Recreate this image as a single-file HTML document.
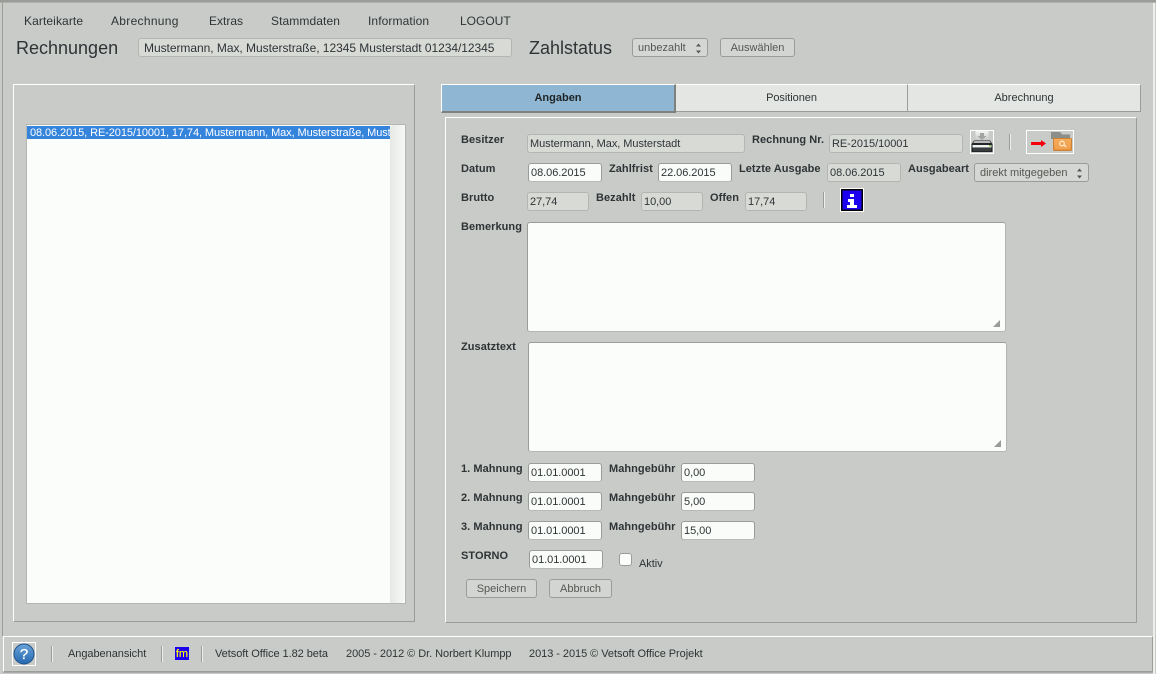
<!DOCTYPE html>
<html><head><meta charset="utf-8">
<style>
html,body{margin:0;padding:0;width:1156px;height:674px;overflow:hidden;background:#c9cbc8;}
body{position:relative;font-family:"Liberation Sans",sans-serif;font-size:11px;color:#2e3436;}
div,span{position:absolute;box-sizing:border-box;white-space:nowrap;}
.m{font-size:12px;top:13px;line-height:16px;}
.t{font-size:18px;line-height:22px;top:37px;}
.l{font-weight:bold;font-size:11px;line-height:14px;color:#2e3436;letter-spacing:.05px;}
.ro,.in{height:19px;border-radius:3px;font-size:11px;line-height:18px;padding-left:2px;overflow:hidden;letter-spacing:-.05px;}
.ro{background:#d8dad6;border:1px solid #b4b6b3;color:#2e3436;}
.in{background:#fafcf9;border:1px solid #9a9c99;border-bottom-color:#b8bab7;color:#2e3436;}
.btn{height:19px;border-radius:3px;background:#d3d5d2;border:1px solid #9a9c99;color:#555753;font-size:11px;line-height:18px;text-align:center;}
.ta{background:#fbfdfa;border:1px solid #9a9c99;border-radius:3px;border-bottom-color:#b4b6b3;border-right-color:#b4b6b3;}
.grip{width:0;height:0;border-style:solid;border-width:0 0 7px 7px;border-color:transparent transparent #9a9c99 transparent;}
.sep{width:1px;background:#9a9c99;border-right:1px solid #eef0ed;box-sizing:content-box;}
.s{top:647px;line-height:14px;font-size:11px;color:#2e3436;letter-spacing:-.05px;}
</style></head><body>
<!-- window frame -->
<div style="left:0;top:0;width:1156px;height:3px;background:#9a9c98;border-bottom:1px solid #b0b2af"></div>
<div style="left:2px;top:2px;width:1px;height:634px;background:#9a9c98"></div>
<div style="left:1153px;top:3px;width:2px;height:671px;background:#eef0ed"></div>

<!-- menu -->
<span class="m" style="left:24px;letter-spacing:.1px">Karteikarte</span>
<span class="m" style="left:111px;letter-spacing:.3px">Abrechnung</span>
<span class="m" style="left:209px">Extras</span>
<span class="m" style="left:271px;letter-spacing:.1px">Stammdaten</span>
<span class="m" style="left:368px;letter-spacing:.1px">Information</span>
<span class="m" style="left:460px">LOGOUT</span>

<span class="t" style="left:16px">Rechnungen</span>
<div class="ro" style="left:138px;top:38px;width:374px;padding-left:5px;font-size:12px;letter-spacing:-.04px">Mustermann, Max, Musterstraße, 12345 Musterstadt 01234/12345</div>
<span class="t" style="left:529px">Zahlstatus</span>
<div class="btn" style="left:632px;top:38px;width:76px;text-align:left;padding-left:5px;background:#d5d7d4">unbezahlt
<svg style="position:absolute;left:61px;top:3px" width="9" height="13"><path d="M2 4.500L4.500 1.500L7 4.500ZM2 8.500L4.500 11.500L7 8.500Z" fill="#555753"/></svg></div>
<div class="btn" style="left:720px;top:38px;width:75px">Auswählen</div>

<!-- left panel -->
<div style="left:13px;top:84px;width:402px;height:538px;border:1px solid #9a9c98;border-top-color:#fff;border-left-color:#fff"></div>
<div style="left:26px;top:124px;width:380px;height:480px;background:#fbfdfa;border:1px solid #b4b6b3;overflow:hidden">
 <div style="left:0;top:1px;width:363px;height:13px;background:#3584dc;color:#fff;font-size:11px;line-height:14px;padding-left:3px;overflow:hidden;letter-spacing:-.09px">08.06.2015, RE-2015/10001, 17,74, Mustermann, Max, Musterstraße, Mustermann</div>
 <div style="left:363px;top:0;width:15px;height:478px;background:linear-gradient(90deg,#e6e8e5,#f7f9f6);border-radius:4px 0 6px 0"></div>
</div>

<!-- tabs -->
<div style="left:441px;top:84px;width:235px;height:29px;background:#8fb6d2;border:1px solid #9a9c98;border-top:1px solid #fff;border-left:1px solid #fff;border-right:2px solid #7f817e;border-bottom:2px solid #7f817e;font-weight:bold;text-align:center;line-height:27px;color:#1e2426">Angaben</div>
<div style="left:676px;top:84px;width:232px;height:28px;background:#e4e6e3;border-top:1px solid #fff;border-right:1px solid #9a9c98;border-bottom:1px solid #9a9c98;text-align:center;line-height:27px;letter-spacing:-.05px">Positionen</div>
<div style="left:908px;top:84px;width:233px;height:28px;background:#e4e6e3;border-top:1px solid #fff;border-right:1px solid #9a9c98;border-bottom:1px solid #9a9c98;text-align:center;line-height:27px">Abrechnung</div>

<!-- form panel -->
<div style="left:445px;top:117px;width:692px;height:506px;border:1px solid #9a9c98;border-top-color:#fff;border-left-color:#fff"></div>

<!-- row 1 -->
<span class="l" style="left:461px;top:133px">Besitzer</span>
<div class="ro" style="left:527px;top:134px;width:218px">Mustermann, Max, Musterstadt</div>
<span class="l" style="left:752px;top:133px">Rechnung Nr.</span>
<div class="ro" style="left:829px;top:134px;width:134px">RE-2015/10001</div>
<!-- printer -->
<div style="left:970px;top:130px;width:24px;height:24px;border:1px solid #fff;overflow:hidden"></div>
<svg style="position:absolute;left:970px;top:130px" width="24" height="24" viewBox="0 0 24 24">
<defs><linearGradient id="pp" x1="0" y1="0" x2="0" y2="1"><stop offset="0" stop-color="#f4f5f3"/><stop offset="1" stop-color="#c4c6c3"/></linearGradient></defs>
<rect x="5.500" y="1" width="13" height="10" fill="url(#pp)"/>
<path d="M10 3h4v3h2.500L12 10 7.500 6H10z" fill="#a2a4a1"/>
<path d="M4 10.500h16l2.500 3.500v8H1.500v-8z" fill="#23272a"/>
<path d="M4.500 11h15l1.500 2H3z" fill="#b9bbb8"/>
<rect x="2.500" y="15" width="19" height="2.500" fill="#f2f4f0"/>
<rect x="3" y="18" width="18" height="3" fill="#3a3e40"/>
<rect x="19" y="15" width="2" height="1.500" fill="#8ac04a"/>
</svg>
<div class="sep" style="left:1009px;top:134px;height:16px"></div>
<!-- arrow+folder -->
<div style="left:1026px;top:130px;width:48px;height:24px;border:1px solid #fff;overflow:hidden"></div>
<svg style="position:absolute;left:1026px;top:130px" width="48" height="24" viewBox="0 0 48 24">
<defs><linearGradient id="ff" x1="0" y1="0" x2="0" y2="1"><stop offset="0" stop-color="#f7b25e"/><stop offset="1" stop-color="#e8913a"/></linearGradient></defs>
<rect x="5" y="12" width="11" height="3" fill="#f4000a"/><path d="M15 10l5 3.500-5 3.500z" fill="#f4000a"/>
<path d="M25 2h9l2.500 2.500H44V9H25z" fill="#8c8e8a"/>
<rect x="27.500" y="8.500" width="18" height="12" rx="1" fill="url(#ff)" stroke="#cc8234"/>
<rect x="29" y="10" width="15" height="9" rx="1.500" fill="#f4a755" opacity=".7"/>
<circle cx="36" cy="13.500" r="2.300" fill="none" stroke="#fde6c8" stroke-width="1.300"/>
<path d="M37.800 15l2.500 1.800" stroke="#fde6c8" stroke-width="1.400"/>
</svg>

<!-- row 2 -->
<span class="l" style="left:461px;top:162px">Datum</span>
<div class="in" style="left:528px;top:163px;width:74px">08.06.2015</div>
<span class="l" style="left:609px;top:162px">Zahlfrist</span>
<div class="in" style="left:658px;top:163px;width:74px">22.06.2015</div>
<span class="l" style="left:739px;top:162px">Letzte Ausgabe</span>
<div class="ro" style="left:827px;top:163px;width:74px">08.06.2015</div>
<span class="l" style="left:908px;top:162px">Ausgabeart</span>
<div class="btn" style="left:974px;top:163px;width:115px;text-align:left;padding-left:5px;background:#d5d7d4">direkt mitgegeben
<svg style="position:absolute;left:100px;top:3px" width="9" height="13"><path d="M2 4.500L4.500 1.500L7 4.500ZM2 8.500L4.500 11.500L7 8.500Z" fill="#555753"/></svg></div>

<!-- row 3 -->
<span class="l" style="left:461px;top:191px">Brutto</span>
<div class="ro" style="left:527px;top:192px;width:62px">27,74</div>
<span class="l" style="left:596px;top:191px">Bezahlt</span>
<div class="ro" style="left:641px;top:192px;width:62px">10,00</div>
<span class="l" style="left:710px;top:191px">Offen</span>
<div class="ro" style="left:745px;top:192px;width:62px">17,74</div>
<div class="sep" style="left:823px;top:192px;height:16px"></div>
<svg style="position:absolute;left:840px;top:188px" width="24" height="24" viewBox="0 0 24 24">
<rect width="24" height="24" fill="#fff"/><rect x="1" y="1" width="22" height="22" fill="#000"/><rect x="2.500" y="2.500" width="19" height="19" fill="#1c00f0"/>
<path d="M10 6h4v3h-4zM8 11h6v6h3v3H7v-3h3v-3H8z" fill="#fff"/>
</svg>

<!-- bemerkung -->
<span class="l" style="left:461px;top:220px">Bemerkung</span>
<div class="ta" style="left:527px;top:222px;width:479px;height:110px"><div class="grip" style="left:465px;top:97px"></div></div>
<span class="l" style="left:461px;top:340px">Zusatztext</span>
<div class="ta" style="left:528px;top:342px;width:479px;height:110px"><div class="grip" style="left:465px;top:97px"></div></div>

<!-- mahnung -->
<span class="l" style="left:461px;top:462px">1. Mahnung</span>
<div class="in" style="left:528px;top:463px;width:74px">01.01.0001</div>
<span class="l" style="left:609px;top:462px">Mahngebühr</span>
<div class="in" style="left:681px;top:463px;width:74px">0,00</div>
<span class="l" style="left:461px;top:491px">2. Mahnung</span>
<div class="in" style="left:528px;top:492px;width:74px">01.01.0001</div>
<span class="l" style="left:609px;top:491px">Mahngebühr</span>
<div class="in" style="left:681px;top:492px;width:74px">5,00</div>
<span class="l" style="left:461px;top:520px">3. Mahnung</span>
<div class="in" style="left:528px;top:521px;width:74px">01.01.0001</div>
<span class="l" style="left:609px;top:520px">Mahngebühr</span>
<div class="in" style="left:681px;top:521px;width:74px">15,00</div>
<span class="l" style="left:461px;top:549px">STORNO</span>
<div class="in" style="left:529px;top:550px;width:74px">01.01.0001</div>
<div style="left:619px;top:553px;width:13px;height:13px;background:#fbfdfa;border:1px solid #9a9c99;border-radius:3px"></div>
<span style="left:639px;top:557px;line-height:14px;font-size:11px;letter-spacing:-.05px">Aktiv</span>
<div class="btn" style="left:466px;top:579px;width:71px">Speichern</div>
<div class="btn" style="left:549px;top:579px;width:63px">Abbruch</div>

<!-- status bar -->
<div style="left:3px;top:636px;width:1150px;height:36px;border-top:1px solid #fff;border-left:1px solid #fff;border-right:1px solid #9a9c98;border-bottom:1px solid #9a9c98"></div>
<div style="left:3px;top:672px;width:1150px;height:1px;background:#a8aaa7"></div>
<div style="left:12px;top:642px;width:24px;height:24px;border:1px solid #fff;overflow:hidden">
<svg style="position:absolute;left:0;top:0" width="22" height="22"><defs><linearGradient id="hh" x1="0" y1="0" x2="0" y2="1"><stop offset="0" stop-color="#6aa3da"/><stop offset="1" stop-color="#2569b0"/></linearGradient></defs><circle cx="11" cy="11" r="10" fill="url(#hh)" stroke="#20508a"/><text x="11" y="16" font-family="Liberation Sans" font-size="15" fill="#fff" stroke="#fff" stroke-width=".3" text-anchor="middle">?</text></svg></div>
<div class="sep" style="left:51px;top:646px;height:16px"></div>
<span class="s" style="left:68px">Angabenansicht</span>
<div class="sep" style="left:161px;top:646px;height:16px"></div>
<span style="left:175px;top:647px;width:14px;height:13px;background:#1c00f0;color:#ff0;font-size:11px;line-height:14px;text-align:center;text-shadow:0 0 .4px #ff0">fm</span>
<div class="sep" style="left:201px;top:646px;height:16px"></div>
<span class="s" style="left:215px">Vetsoft Office 1.82 beta</span>
<span class="s" style="left:346px">2005 - 2012 © Dr. Norbert Klumpp</span>
<span class="s" style="left:529px">2013 - 2015 © Vetsoft Office Projekt</span>
</body></html>
